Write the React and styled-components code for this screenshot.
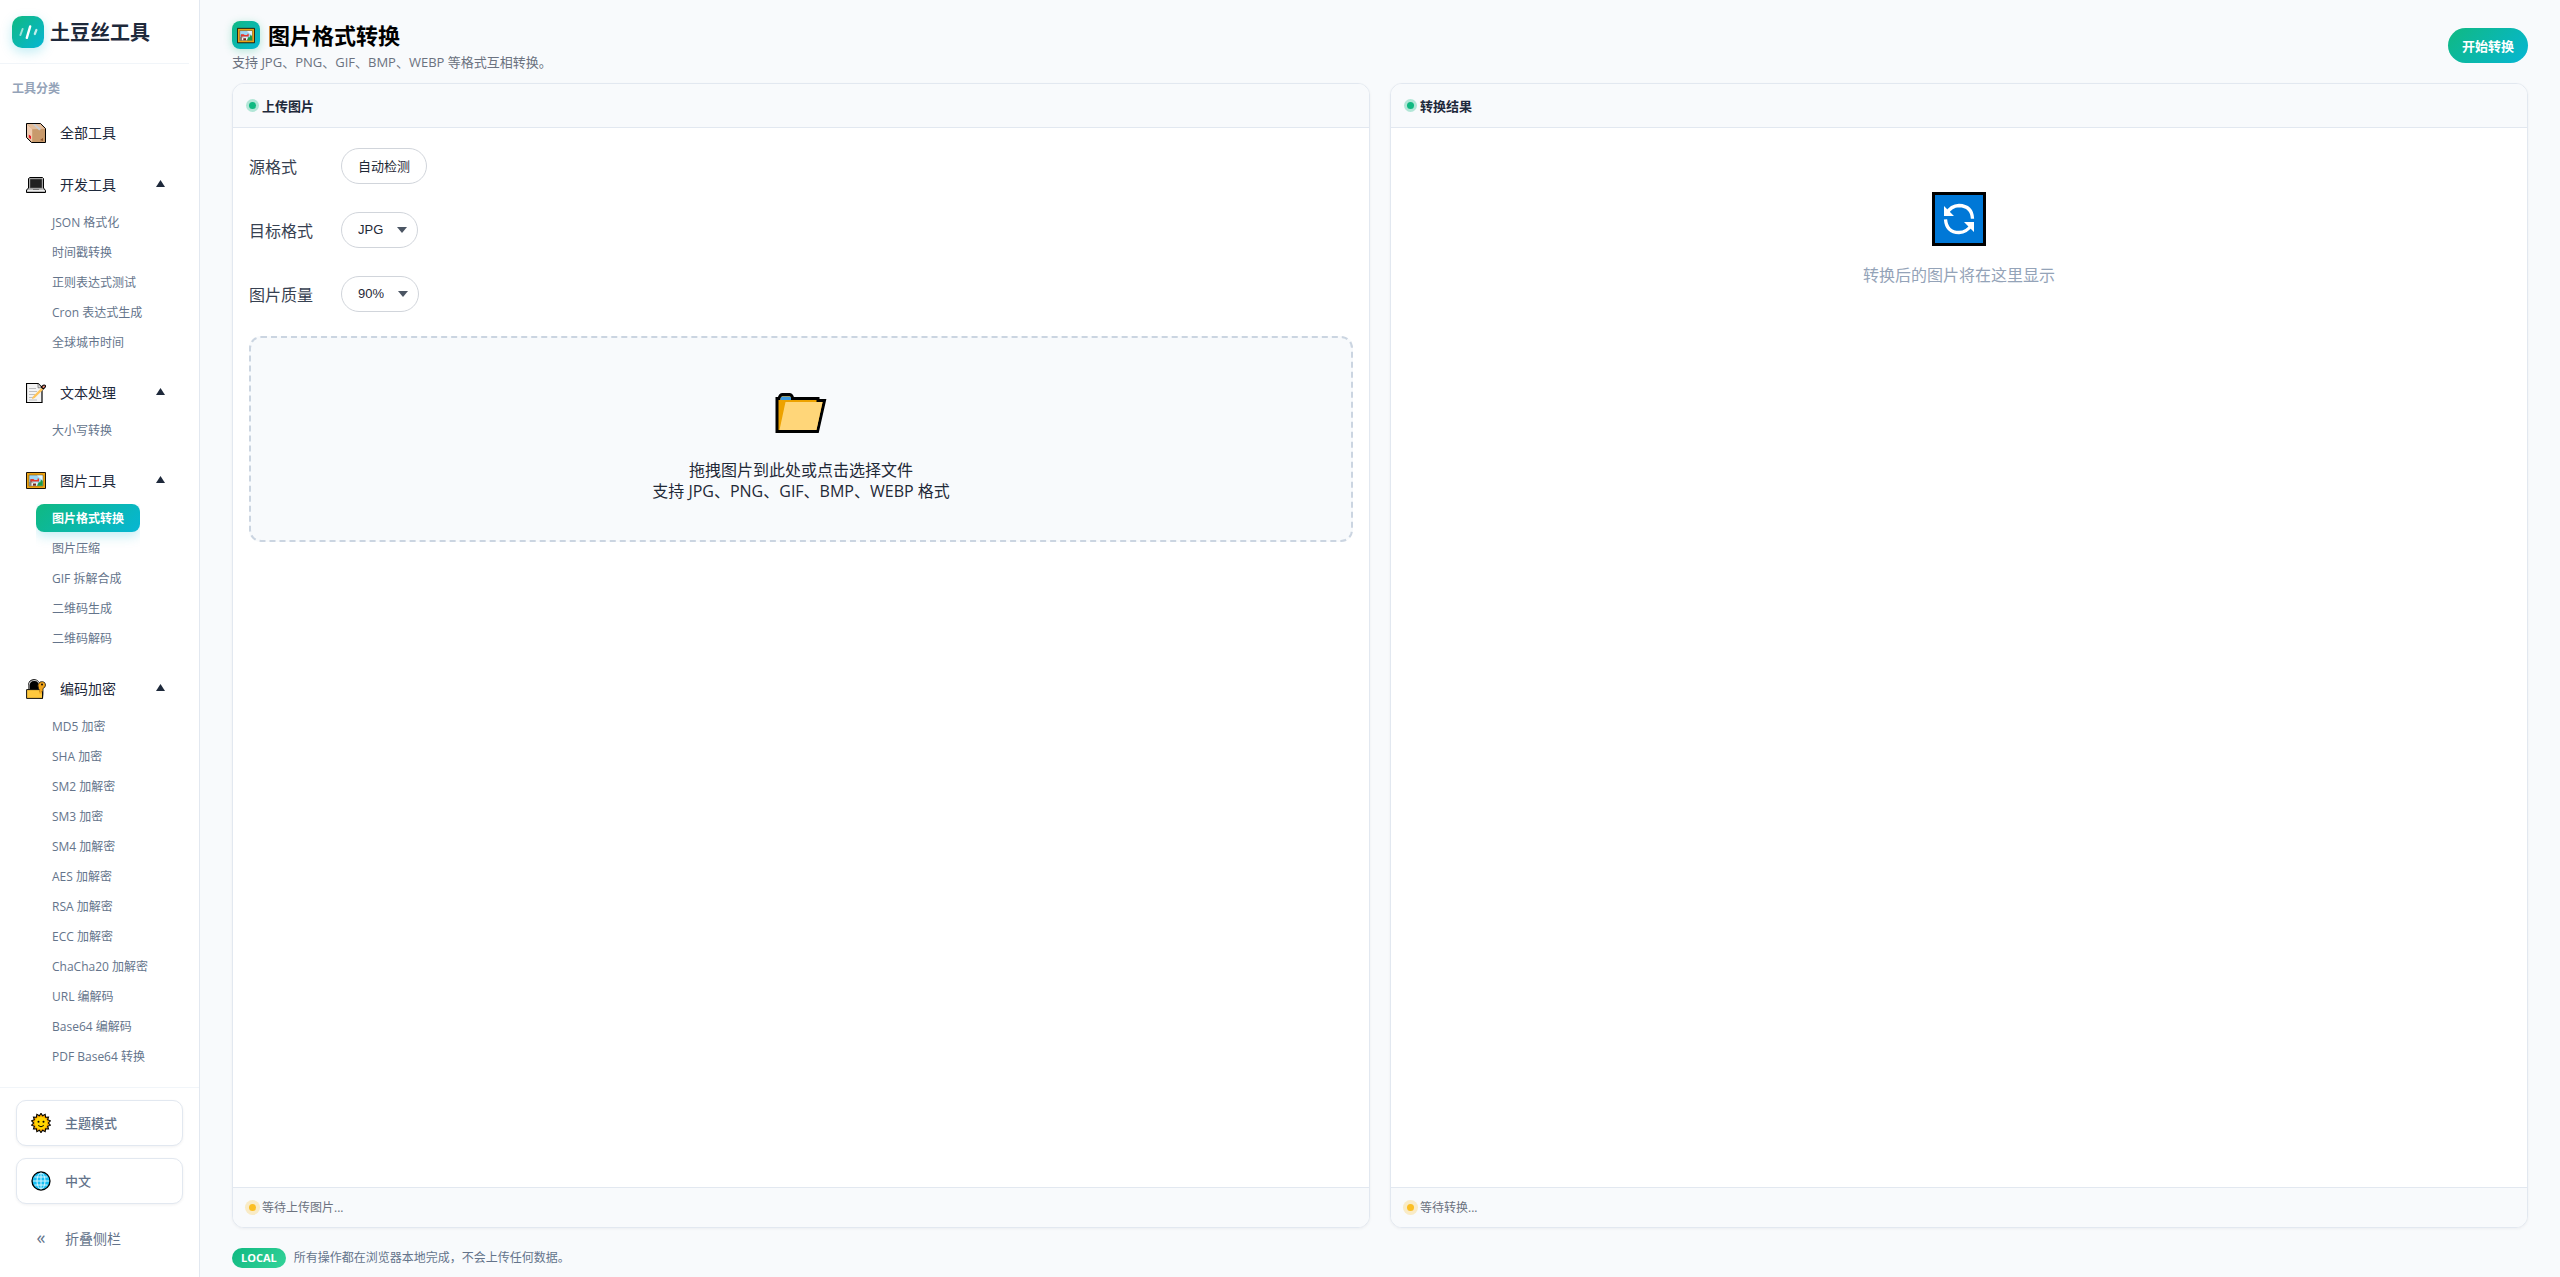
import React, { useState } from "react";
import styled, { createGlobalStyle, css } from "styled-components";

const brand = "linear-gradient(135deg, #10b981, #06b6d4)";

const GlobalStyle = createGlobalStyle`
  *, *::before, *::after { box-sizing: border-box; }
  body {
    margin: 0;
    background: #f8fafc;
    color: #1e293b;
    font-family: "Open Sans", "Noto Sans CJK SC", sans-serif;
    font-size: 16px;
    line-height: 21px;
  }
  button { font-family: inherit; margin: 0; cursor: pointer; }
  h1, h2, p, ul { margin: 0; padding: 0; }
`;

const Page = styled.div`
  display: flex;
  height: 100vh;
`;

/* ---------- sidebar ---------- */

const Sidebar = styled.aside`
  display: flex;
  flex: 0 0 200px;
  flex-direction: column;
  background: #fff;
  border-right: 1px solid #e2e8f0;
`;

const SidebarScroll = styled.div`
  flex: 1;
  min-height: 0;
  padding-right: 10px;
  overflow: hidden;
`;

const Brand = styled.div`
  display: flex;
  align-items: center;
  gap: 6px;
  height: 64px;
  padding: 0 12px;
  border-bottom: 1px solid #f1f5f9;
`;

const BrandMark = styled.span`
  display: flex;
  width: 32px;
  height: 32px;
  border-radius: 10px;
  background: ${brand};
  box-shadow: 0 4px 12px rgba(6, 182, 212, 0.25);
`;

const BrandName = styled.span`
  padding-top: 2px;
  font-size: 20px;
  line-height: 32px;
  font-weight: 700;
  white-space: nowrap;
`;

const NavTitle = styled.h2`
  padding: 15px 12px 11px;
  font-size: 12px;
  line-height: 20px;
  font-weight: 600;
  color: #94a3b8;
`;

const Nav = styled.nav`
  display: flex;
  flex-direction: column;
  gap: 6px;
  padding: 0 12px;
`;

const NavHead = styled.button`
  display: flex;
  align-items: center;
  gap: 14px;
  width: 100%;
  height: 46px;
  padding: 0 12px 0 14px;
  border: 0;
  background: transparent;
  color: #1e293b;
  font-size: 14px;
  line-height: 20px;
  text-align: left;
`;

const Arrow = styled.svg`
  width: 9px;
  height: 7px;
  margin: 0 0 4px auto;
  fill: #1e293b;
  transform: ${(p) => (p.$open ? "none" : "rotate(180deg)")};
`;

const SubList = styled.ul`
  display: flex;
  flex-direction: column;
  align-items: flex-start;
  gap: 2px;
  width: fit-content;
  margin-left: 24px;
  padding-bottom: 8px;
  list-style: none;
  overflow: hidden;
`;

const SubLink = styled.a`
  display: block;
  padding: 5px 16px 3px;
  border-radius: 8px;
  color: #64748b;
  font-size: 12px;
  line-height: 20px;
  text-decoration: none;
  white-space: nowrap;
  ${(p) =>
    p.$active &&
    css`
      background: ${brand};
      color: #fff;
      font-weight: 700;
      box-shadow: 0 4px 12px rgba(6, 182, 212, 0.25);
    `}
`;

const SidebarFoot = styled.div`
  display: flex;
  flex-direction: column;
  gap: 12px;
  padding: 12px 16px 15px;
  border-top: 1px solid #f1f5f9;
`;

const FootButton = styled.button`
  display: flex;
  align-items: center;
  gap: 14px;
  height: 46px;
  padding: 0 14px;
  border: 1px solid ${(p) => (p.$plain ? "transparent" : "#e2e8f0")};
  border-radius: 10px;
  background: #fff;
  box-shadow: ${(p) => (p.$plain ? "none" : "0 1px 3px rgba(15, 23, 42, 0.06)")};
  color: #64748b;
  font-size: ${(p) => (p.$plain ? "14px" : "13px")};
  font-weight: ${(p) => (p.$plain ? 400 : 500)};
  line-height: 20px;
`;

const Chevrons = styled.span`
  width: 20px;
  padding-bottom: 4px;
  font-size: 18px;
  text-align: center;
`;

/* ---------- main area ---------- */

const Main = styled.main`
  display: flex;
  flex: 1;
  flex-direction: column;
  min-width: 0;
  padding: 20px 32px 9px;
`;

const PageHead = styled.header`
  display: flex;
  align-items: flex-start;
  justify-content: space-between;
  margin-bottom: 9px;
`;

const TitleRow = styled.div`
  display: flex;
  align-items: center;
  gap: 8px;
  height: 30px;
`;

const TitleIcon = styled.span`
  display: flex;
  align-items: center;
  justify-content: center;
  width: 28px;
  height: 28px;
  padding-top: 2px;
  border-radius: 8px;
  background: ${brand};
  box-shadow: 0 2px 8px rgba(16, 185, 129, 0.3);
`;

const Title = styled.h1`
  color: #000;
  font-size: 22px;
  line-height: 30px;
  font-weight: 700;
`;

const Subtitle = styled.p`
  color: #6b7280;
  font-size: 13px;
  line-height: 24px;
`;

const PrimaryButton = styled.button`
  height: 35px;
  margin-top: 8px;
  padding: 0 14px;
  border: 0;
  border-radius: 18px;
  background: ${brand};
  color: #fff;
  font-size: 13px;
  font-weight: 700;
  line-height: 20px;
`;

const Panels = styled.div`
  display: grid;
  flex: 1;
  grid-template-columns: 1fr 1fr;
  gap: 20px;
  min-height: 0;
`;

const Panel = styled.section`
  display: flex;
  flex-direction: column;
  border: 1px solid #e2e8f0;
  border-radius: 12px;
  background: #fff;
  box-shadow: 0 1px 3px rgba(15, 23, 42, 0.05);
  overflow: hidden;
`;

const PanelHead = styled.div`
  display: flex;
  align-items: center;
  gap: 6px;
  height: 44px;
  padding: 0 16px;
  border-bottom: 1px solid #e2e8f0;
  background: #f8fafc;
`;

const PanelTitle = styled.h2`
  font-size: 13px;
  line-height: 20px;
  font-weight: 600;
`;

const Dot = styled.span`
  width: 7px;
  height: 7px;
  border-radius: 50%;
  background: ${(p) => (p.$waiting ? "#fbbf24" : "#10b981")};
  box-shadow: ${(p) =>
    p.$waiting ? "0 0 0 4px rgba(251, 191, 36, 0.25)" : "0 0 0 3px rgba(16, 185, 129, 0.3)"};
`;

const PanelBody = styled.div`
  display: flex;
  flex: 1;
  flex-direction: column;
  gap: 20px;
  padding: 16px;
`;

const PanelFoot = styled.div`
  display: flex;
  align-items: center;
  gap: 6px;
  height: 40px;
  padding: 0 16px;
  border-top: 1px solid #e2e8f0;
  background: #f8fafc;
  color: #6b7280;
  font-size: 12px;
  line-height: 20px;
`;

const Field = styled.div`
  display: flex;
  align-items: center;
  gap: 12px;
  height: 44px;
`;

const FieldLabel = styled.label`
  width: 80px;
  padding-top: 2px;
  color: #374151;
`;

const pill = css`
  height: 36px;
  border: 1px solid #d1d5db;
  border-radius: 18px;
  background: #fff;
  color: #1f2937;
  font-size: 13px;
  line-height: 20px;
`;

const PillButton = styled.button`
  ${pill}
  padding: 0 16px;
`;

const SelectWrap = styled.span`
  position: relative;
  display: inline-flex;
`;

const PillSelect = styled.select`
  ${pill}
  appearance: none;
  field-sizing: content;
  padding: 0 34px 0 16px;
  font-family: "Liberation Sans", Arial, sans-serif;
`;

const SelectMark = styled.svg`
  position: absolute;
  top: 15px;
  right: 11px;
  width: 10px;
  height: 6px;
  fill: #4b5563;
  pointer-events: none;
`;

const DropZone = styled.label`
  display: flex;
  flex-direction: column;
  align-items: center;
  padding: 42px 40px 38px;
  border: 2px dashed #cbd5e1;
  border-radius: 12px;
  background: #f8fafc;
  color: #1f2937;
  text-align: center;
  cursor: pointer;
  input { display: none; }
  svg { margin-bottom: 18px; }
`;

const Empty = styled.div`
  display: flex;
  flex-direction: column;
  align-items: center;
  gap: 19px;
  padding-top: 48px;
  color: #94a3b8;
`;

const Notice = styled.footer`
  display: flex;
  align-items: center;
  gap: 8px;
  margin-top: 20px;
  color: #64748b;
  font-size: 12px;
  line-height: 20px;
`;

const Badge = styled.span`
  padding: 0 9px;
  border-radius: 10px;
  background: linear-gradient(135deg, #10b981, #34d399);
  color: #fff;
  font-size: 11px;
  font-weight: 700;
`;

/* ---------- drawings ---------- */

const LogoStrokes = () => (
  <svg width="32" height="32" viewBox="0 0 32 32" fill="none" stroke="#fff" strokeLinecap="round">
    <path d="M18.2 10.4 14.8 21.8" strokeWidth="2.4" />
    <path d="M10.6 13 8.4 19" strokeWidth="2" opacity=".6" />
    <path d="M24.4 14 22.8 18" strokeWidth="2.2" opacity=".75" />
  </svg>
);

const BoxIcon = () => (
  <svg width="20" height="20" viewBox="0 0 20 20">
    <path d="M.5.5h14l5 5v14h-14l-5-5z" fill="#c89a6c" stroke="#000" />
    <path d="M1 1h13.3l4.7 4.700-12.500.6z" fill="#e3bd9b" />
    <path d="M1 1.300 6.200 6v13L1 14z" fill="#efcbb0" />
    <path d="m6.500 1 2.500 0 6 5-1.800 1.400z" fill="#c8ccd2" />
    <path d="m2.800 11.500 2.200 1.800v3l-2.200-1.800z" fill="#e81123" />
    <path d="m14 17 3-2v3z" fill="#8e562e" />
  </svg>
);

const LaptopIcon = () => (
  <svg width="20" height="20" viewBox="0 0 20 20">
    <path d="M2.500 3.500 4 2.500h12.500l1 1V13l2 2.500V17.500H.5V15l2-2z" fill="#b8b8b8" stroke="#000" />
    <path d="M4 4h12v9H4z" fill="#222" stroke="#777" strokeWidth=".6" />
    <path d="M1.500 15.500h17" stroke="#eee" />
    <path d="M7 14.500h6" stroke="#777" />
  </svg>
);

const MemoIcon = () => (
  <svg width="20" height="20" viewBox="0 0 20 20">
    <path d="M.5.5H12l4 4v15H.5z" fill="#f4f4f4" stroke="#000" strokeWidth="1.2" />
    <path d="M12 .8v4h4" fill="#ddd" stroke="#555" strokeWidth=".6" />
    <path d="M3 5.500h7M3 8.500h8M3 11.500h6M3 14.500h4M3 17h8" stroke="#b0b0b0" strokeWidth=".8" />
    <path d="m5.800 16.200 1.200-2.700L16.300 4l1.700 1.700-9.300 9.300z" fill="#ffc55a" />
    <path d="m15.300 4 2-1.800q1.200-.6 1.900.2.600 1-.2 1.900L17.300 6z" fill="#f6907a" stroke="#000" strokeWidth="1.100" />
  </svg>
);

const PictureIcon = ({ size = 20 }) => (
  <svg width={size} height={size} viewBox="0 0 20 20">
    <path d="M.5 1.500h19v16H.5z" fill="#eaa316" stroke="#1a1208" />
    <path d="M3 4h14v11H3z" fill="#9cd6f5" stroke="#80520b" strokeWidth=".6" />
    <path d="m11 4.500 5.500 0v5z" fill="#e6f6ff" />
    <path d="M3.300 11h4v3.700h-4zM4 8.500h2V11H4z" fill="#827d78" />
    <path d="M5.500 11.500h6v3.200h-6z" fill="#f5f0ea" />
    <path d="M7 12.500h3v2.200H7z" fill="#6d2a24" />
    <path d="M4.500 8h3l1 1h3V7.500H13v3H4.500z" fill="#e5352b" />
    <path d="m11 14.700 2-4 1 1 1.200-3.200 1.500 2v4.200z" fill="#1c9a43" />
  </svg>
);

const LockIcon = () => (
  <svg width="20" height="20" viewBox="0 0 20 20">
    <path d="M2.500 11V6q.5-5.300 5.500-5.300T13.500 6v5z" fill="#000" stroke="#000" />
    <path d="M3 10V6.200Q3.600 1.800 8 1.500t4.800 3.700" fill="none" stroke="#c4c4c4" strokeWidth="1.100" />
    <path d="M12.500 19V9.500q-2-4 1.500-6.500 5-1.500 5.500 3 0 2.500-2.500 3.500V15l-.5 4.500z" fill="#f2a51c" stroke="#111" strokeWidth=".8" />
    <path d="M.6 10.600h13v2h2.900v6.800H.6z" fill="#ffc83d" stroke="#111" />
    <path d="M13.200 10.500h2.600v4h-2.600z" fill="#f2a51c" />
    <circle cx="16" cy="5.500" r="1" fill="#111" />
  </svg>
);

const SunIcon = () => {
  const points = Array.from({ length: 28 }, (_, i) => {
    const radius = i % 2 ? 7.4 : 9.6;
    const angle = (i * Math.PI) / 14;
    return `${10 + radius * Math.sin(angle)},${10 - radius * Math.cos(angle)}`;
  }).join(" ");
  return (
    <svg width="20" height="20" viewBox="0 0 20 20">
      <polygon points={points} fill="#f7a400" stroke="#000" strokeWidth="1.1" />
      <circle cx="10" cy="10" r="6.300" fill="#ffd500" />
      <circle cx="7.500" cy="8.800" r="1" />
      <circle cx="12.500" cy="8.800" r="1" />
      <path d="M7.200 12.500q2.800 2.600 5.600 0" fill="none" stroke="#000" />
    </svg>
  );
};

const GlobeIcon = () => (
  <svg width="20" height="20" viewBox="0 0 20 20" fill="none">
    <circle cx="10" cy="10" r="9" fill="#16bdf2" stroke="#000" strokeWidth="1.300" />
    <g stroke="#d5f5ff" strokeWidth="1">
      <ellipse cx="10" cy="10" rx="4" ry="8" />
      <path d="M10 2v16M2 10h16M3.500 6h13M3.500 14h13" />
    </g>
  </svg>
);

const FolderIcon = () => (
  <svg width="52" height="62" viewBox="0 0 52 62">
    <path d="M2 18.500V51.500H42.500L49.500 20.500H43V18.500H17.500V17.500Q16.500 14.500 14.500 14.500H7.500Q5 14.500 4 18.500z" fill="#eda200" stroke="#000" strokeWidth="3" />
    <path d="M5.500 20v-2q.5-1.500 2-1.500h7q1.500 0 1.500 1.500v2z" fill="#3a96dd" />
    <path d="M10.500 22h37L41.500 50H4.500z" fill="#ffd679" />
  </svg>
);

const RefreshIcon = () => (
  <svg width="54" height="54" viewBox="0 0 54 54">
    <path d="M1.500 1.500h51v51h-51z" fill="#0078d7" stroke="#000" strokeWidth="3" />
    <path d="M14.500 21.500Q19 13.800 27 13.500 40 14 40.500 26.800" fill="none" stroke="#fff" strokeWidth="3.300" />
    <path d="M13.500 27.300Q14.500 40.300 27 40.500 35 40.200 39.500 33" fill="none" stroke="#fff" strokeWidth="3.300" />
    <path d="M12 14v10h10zM42 40V30H32z" fill="#fff" />
  </svg>
);

/* ---------- data ---------- */

const groups = [
  {
    name: "开发工具",
    Icon: LaptopIcon,
    items: ["JSON 格式化", "时间戳转换", "正则表达式测试", "Cron 表达式生成", "全球城市时间"],
  },
  { name: "文本处理", Icon: MemoIcon, items: ["大小写转换"] },
  {
    name: "图片工具",
    Icon: PictureIcon,
    items: ["图片格式转换", "图片压缩", "GIF 拆解合成", "二维码生成", "二维码解码"],
  },
  {
    name: "编码加密",
    Icon: LockIcon,
    items: [
      "MD5 加密",
      "SHA 加密",
      "SM2 加解密",
      "SM3 加密",
      "SM4 加解密",
      "AES 加解密",
      "RSA 加解密",
      "ECC 加解密",
      "ChaCha20 加解密",
      "URL 编解码",
      "Base64 编解码",
      "PDF Base64 转换",
    ],
  },
];

const formats = ["JPG", "PNG", "GIF", "BMP", "WEBP"];
const qualities = ["100%", "90%", "80%", "70%", "60%"];

function NavGroup({ name, Icon, items, current }) {
  const [open, setOpen] = useState(true);
  return (
    <div>
      <NavHead type="button" aria-expanded={open} onClick={() => setOpen(!open)}>
        <Icon />
        {name}
        <Arrow $open={open} viewBox="0 0 9 7">
          <path d="M4.500 0 9 7H0z" />
        </Arrow>
      </NavHead>
      {open && (
        <SubList>
          {items.map((item) => (
            <li key={item}>
              <SubLink href="#" $active={item === current}>
                {item}
              </SubLink>
            </li>
          ))}
        </SubList>
      )}
    </div>
  );
}

function SelectField({ id, label, options, initial }) {
  const [value, setValue] = useState(initial);
  return (
    <Field>
      <FieldLabel htmlFor={id}>{label}</FieldLabel>
      <SelectWrap>
        <PillSelect id={id} value={value} onChange={(e) => setValue(e.target.value)}>
          {options.map((option) => (
            <option key={option}>{option}</option>
          ))}
        </PillSelect>
        <SelectMark viewBox="0 0 10 6">
          <path d="M0 0h10L5 6z" />
        </SelectMark>
      </SelectWrap>
    </Field>
  );
}

export default function App() {
  return (
    <Page>
      <GlobalStyle />
      <Sidebar>
        <SidebarScroll>
          <Brand>
            <BrandMark>
              <LogoStrokes />
            </BrandMark>
            <BrandName>土豆丝工具</BrandName>
          </Brand>
          <NavTitle>工具分类</NavTitle>
          <Nav>
            <NavHead type="button">
              <BoxIcon />
              全部工具
            </NavHead>
            {groups.map((group) => (
              <NavGroup key={group.name} {...group} current="图片格式转换" />
            ))}
          </Nav>
        </SidebarScroll>
        <SidebarFoot>
          <FootButton type="button">
            <SunIcon />
            主题模式
          </FootButton>
          <FootButton type="button">
            <GlobeIcon />
            中文
          </FootButton>
          <FootButton type="button" $plain>
            <Chevrons>«</Chevrons>
            折叠侧栏
          </FootButton>
        </SidebarFoot>
      </Sidebar>

      <Main>
        <PageHead>
          <div>
            <TitleRow>
              <TitleIcon>
                <PictureIcon size={18} />
              </TitleIcon>
              <Title>图片格式转换</Title>
            </TitleRow>
            <Subtitle>支持 JPG、PNG、GIF、BMP、WEBP 等格式互相转换。</Subtitle>
          </div>
          <PrimaryButton type="button">开始转换</PrimaryButton>
        </PageHead>

        <Panels>
          <Panel>
            <PanelHead>
              <Dot />
              <PanelTitle>上传图片</PanelTitle>
            </PanelHead>
            <PanelBody>
              <Field>
                <FieldLabel htmlFor="source">源格式</FieldLabel>
                <PillButton id="source" type="button">自动检测</PillButton>
              </Field>
              <SelectField id="target" label="目标格式" options={formats} initial="JPG" />
              <SelectField id="quality" label="图片质量" options={qualities} initial="90%" />
              <DropZone>
                <input type="file" accept="image/*" />
                <FolderIcon />
                <span>拖拽图片到此处或点击选择文件</span>
                <span>支持 JPG、PNG、GIF、BMP、WEBP 格式</span>
              </DropZone>
            </PanelBody>
            <PanelFoot>
              <Dot $waiting />
              等待上传图片...
            </PanelFoot>
          </Panel>

          <Panel>
            <PanelHead>
              <Dot />
              <PanelTitle>转换结果</PanelTitle>
            </PanelHead>
            <PanelBody>
              <Empty>
                <RefreshIcon />
                <p>转换后的图片将在这里显示</p>
              </Empty>
            </PanelBody>
            <PanelFoot>
              <Dot $waiting />
              等待转换...
            </PanelFoot>
          </Panel>
        </Panels>

        <Notice>
          <Badge>LOCAL</Badge>
          所有操作都在浏览器本地完成，不会上传任何数据。
        </Notice>
      </Main>
    </Page>
  );
}
